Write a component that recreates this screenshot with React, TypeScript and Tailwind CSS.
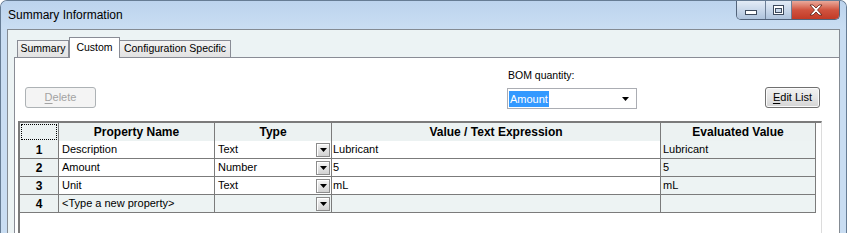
import React from "react";

type Row = {
  n: string;
  name: string;
  type: string;
  value: string;
  evaluated: string;
  fresh?: boolean;
};

const rows: Row[] = [
  { n: "1", name: "Description", type: "Text", value: "Lubricant", evaluated: "Lubricant" },
  { n: "2", name: "Amount", type: "Number", value: "5", evaluated: "5" },
  { n: "3", name: "Unit", type: "Text", value: "mL", evaluated: "mL" },
  { n: "4", name: "<Type a new property>", type: "", value: "", evaluated: "", fresh: true },
];

function CellDropButton() {
  return (
    <span className="mr-px flex h-[14px] w-[14px] shrink-0 items-center justify-center border border-[#8c8c8c] bg-gradient-to-b from-[#f6f6f6] to-[#d2d2d2] shadow-[inset_1px_1px_0_#ffffff]">
      <svg width="7" height="4" viewBox="0 0 7 4">
        <path d="M0 0h7L3.5 4z" fill="#000" />
      </svg>
    </span>
  );
}

function WindowControls() {
  return (
    <div className="mr-[6px] flex h-[19px] overflow-hidden rounded-b-[5px] border border-t-0 border-[#52637a]">
      <div className="flex w-[29px] items-center justify-center border-r border-[#6d7f96] bg-gradient-to-b from-[#e3ecf6] via-[#c9d8ea] to-[#aec3dc]">
        <svg width="12" height="6" viewBox="0 0 12 6" className="mt-[5px]">
          <rect x="0.5" y="0.5" width="11" height="4" fill="#fff" stroke="#3d4a5c" />
        </svg>
      </div>
      <div className="flex w-[26px] items-center justify-center border-r border-[#6d7f96] bg-gradient-to-b from-[#e3ecf6] via-[#c9d8ea] to-[#aec3dc]">
        <svg width="11" height="10" viewBox="0 0 11 10">
          <rect x="0.5" y="0.5" width="10" height="9" fill="#fff" stroke="#3d4a5c" />
          <rect x="2.5" y="3.5" width="6" height="4" fill="#c9d8ea" stroke="#3d4a5c" />
        </svg>
      </div>
      <div className="flex w-[47px] items-center justify-center bg-gradient-to-b from-[#e9a99b] via-[#d0533f] to-[#c23a26]">
        <svg width="14" height="12" viewBox="0 0 14 12">
          <path
            d="M1 1h3l3 3 3-3h3l-4.5 5 4.5 5h-3l-3-3-3 3H1l4.5-5z"
            fill="#fff"
            stroke="#5a2017"
            strokeWidth="0.8"
            strokeLinejoin="round"
          />
        </svg>
      </div>
    </div>
  );
}

function Tabs() {
  return (
    <div className="flex h-[27px] items-end pl-[3px] text-[10.5px]">
      <div className="flex h-[17px] w-[52px] items-center justify-center border border-b-0 border-[#898c95] bg-gradient-to-b from-[#f3f3f3] to-[#e2e2e2]">
        Summary
      </div>
      <div className="relative z-10 -mb-px flex h-[21px] w-[51px] items-start justify-center border border-b-0 border-[#898c95] bg-white pt-[2px]">
        Custom
      </div>
      <div className="flex h-[17px] w-[111px] items-center justify-center whitespace-nowrap border border-b-0 border-l-0 border-[#898c95] bg-gradient-to-b from-[#f3f3f3] to-[#e2e2e2]">
        Configuration Specific
      </div>
    </div>
  );
}

function Toolbar() {
  return (
    <div className="flex h-[63px] items-end pb-[12px] pl-[10px]">
      <button className="mb-px h-[21px] w-[71px] rounded-[3px] border border-[#adb2b5] bg-[#f4f4f4] text-[#a3a3a3]">
        <span className="underline underline-offset-2">D</span>elete
      </button>
      <div className="ml-[411px] flex w-[130px] flex-col">
        <span className="mb-[6px] pl-px text-[10.5px] leading-[13px]">BOM quantity:</span>
        <div className="flex h-[21px] items-center border border-[#abadb3] bg-white pl-[1px] pr-[4px]">
          <span className="bg-[#3399ff] px-px leading-[16px] text-white">Amount</span>
          <svg width="8" height="4" viewBox="0 0 8 4" className="ml-auto mr-[2px]">
            <path d="M0 0h7L3.5 4z" fill="#000" />
          </svg>
        </div>
      </div>
      <button className="mb-px ml-[128px] h-[21px] w-[55px] rounded-[3px] border border-[#707070] bg-gradient-to-b from-[#f2f2f2] via-[#e6e6e6] to-[#d4d4d4] shadow-[inset_0_0_0_1px_#fbfbfb]">
        <span className="underline underline-offset-2">E</span>dit List
      </button>
    </div>
  );
}

function PropertyGrid() {
  const head = "flex items-center justify-center border-b border-r border-[#7b7b7b] bg-[#ecf2f2] text-[12px] font-bold";
  const cell = "flex items-center border-b border-r border-[#7b7b7b] whitespace-nowrap overflow-hidden";
  return (
    <div className="ml-[3px] min-h-0 w-[804px] flex-1 border-l-2 border-r border-t-2 border-l-[#7b7b7b] border-r-[#dcdcdc] border-t-[#7b7b7b] bg-white">
      <div className="grid grid-cols-[39px_156px_117px_329px_155px] auto-rows-[18px]">
        <div className="flex h-[19px] items-stretch border-b border-r border-[#7b7b7b] bg-[#ecf2f2] p-px">
          <div className="flex-1 border border-dotted border-black" />
        </div>
        <div className={`${head} h-[19px]`}>Property Name</div>
        <div className={`${head} h-[19px]`}>Type</div>
        <div className={`${head} h-[19px]`}>Value / Text Expression</div>
        <div className={`${head} h-[19px]`}>Evaluated Value</div>
        {rows.map((r) => (
          <React.Fragment key={r.n}>
            <div className={`${cell} justify-center bg-[#ecf2f2] text-[12px] font-bold`}>{r.n}</div>
            <div className={`${cell} pl-[3px] ${r.fresh ? "bg-[#edf3f3]" : "bg-white"}`}>{r.name}</div>
            <div className={`${cell} justify-between pl-[3px] ${r.fresh ? "bg-[#edf3f3]" : "bg-white"}`}>
              <span>{r.type}</span>
              <CellDropButton />
            </div>
            <div className={`${cell} pl-px ${r.fresh ? "bg-[#edf3f3]" : "bg-white"}`}>{r.value}</div>
            <div className={`${cell} bg-[#edf3f3] pl-[2px]`}>{r.evaluated}</div>
          </React.Fragment>
        ))}
      </div>
    </div>
  );
}

export default function App() {
  return (
    <div className="flex h-[233px] w-[847px] flex-col overflow-hidden rounded-t-[7px] border border-b-0 border-[#667c94] bg-[#c9ddf2] font-['Liberation_Sans',Arial,sans-serif] text-[11px] text-black">
      <div className="flex h-[28px] shrink-0 items-start bg-gradient-to-b from-[#bcd3ed] to-[#cadef3]">
        <span className="pl-[7px] pt-[6px] text-[12px] leading-[16px]">Summary Information</span>
        <div className="ml-auto">
          <WindowControls />
        </div>
      </div>
      <div className="flex min-h-0 flex-1 px-[6px]">
        <div className="flex min-w-0 flex-1 flex-col border-l border-r border-t border-[#848b93] bg-[#ecf3f4] pl-[6px]">
          <Tabs />
          <div className="flex min-h-0 flex-1 flex-col border-l border-t border-[#898c95] bg-white">
            <Toolbar />
            <PropertyGrid />
          </div>
        </div>
      </div>
    </div>
  );
}
